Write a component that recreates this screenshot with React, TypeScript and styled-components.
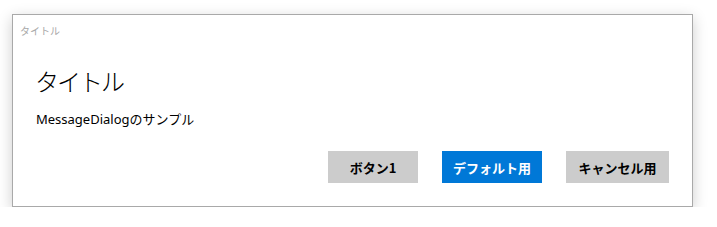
import styled, { createGlobalStyle } from 'styled-components';

const GlobalStyle = createGlobalStyle`
  html, body {
    margin: 0;
    padding: 0;
    background: #fff;
    font-family: "Noto Sans", "Noto Sans CJK JP", sans-serif;
  }
`;

const Page = styled.div`
  padding: 14px 0 0 12px;
`;

const Dialog = styled.div`
  box-sizing: border-box;
  width: 681px;
  height: 193px;
  background: #fff;
  border: 1px solid #a9a9a9;
  box-shadow: 0 4px 14px rgba(0, 0, 0, 0.2);
  display: flex;
  flex-direction: column;
`;

const Caption = styled.div`
  font-size: 10px;
  color: #a7a7a7;
  padding: 6px 0 0 7px;
  height: 20px;
  line-height: 20px;
`;

const Body = styled.div`
  padding: 23px 23px 0 22px;
  display: flex;
  flex-direction: column;
  flex: 1;
`;

const Title = styled.h1`
  margin: 0;
  font-size: 24px;
  font-weight: 300;
  letter-spacing: -2px;
  color: #000;
  line-height: 36px;
`;

const Message = styled.p`
  margin: 9px 0 0 1px;
  font-size: 13px;
  color: #000;
  line-height: 20px;
`;

const Actions = styled.div`
  display: flex;
  justify-content: flex-end;
  gap: 24px;
  margin-top: auto;
  padding-bottom: 23px;
`;

const Button = styled.button<{ $primary?: boolean; $w: number }>`
  width: ${(p) => p.$w}px;
  height: 32px;
  border: none;
  background: ${(p) => (p.$primary ? '#0078d7' : '#cccccc')};
  color: ${(p) => (p.$primary ? '#fff' : '#000')};
  font-family: "Noto Sans CJK JP", sans-serif;
  font-size: 13px;
  font-weight: 700;
  padding: 0;
`;

export default function App() {
  return (
    <>
      <GlobalStyle />
      <Page>
        <Dialog>
          <Caption>タイトル</Caption>
          <Body>
            <Title>タイトル</Title>
            <Message>MessageDialogのサンプル</Message>
            <Actions>
              <Button $w={90}>ボタン1</Button>
              <Button $w={100} $primary>デフォルト用</Button>
              <Button $w={103}>キャンセル用</Button>
            </Actions>
          </Body>
        </Dialog>
      </Page>
    </>
  );
}
